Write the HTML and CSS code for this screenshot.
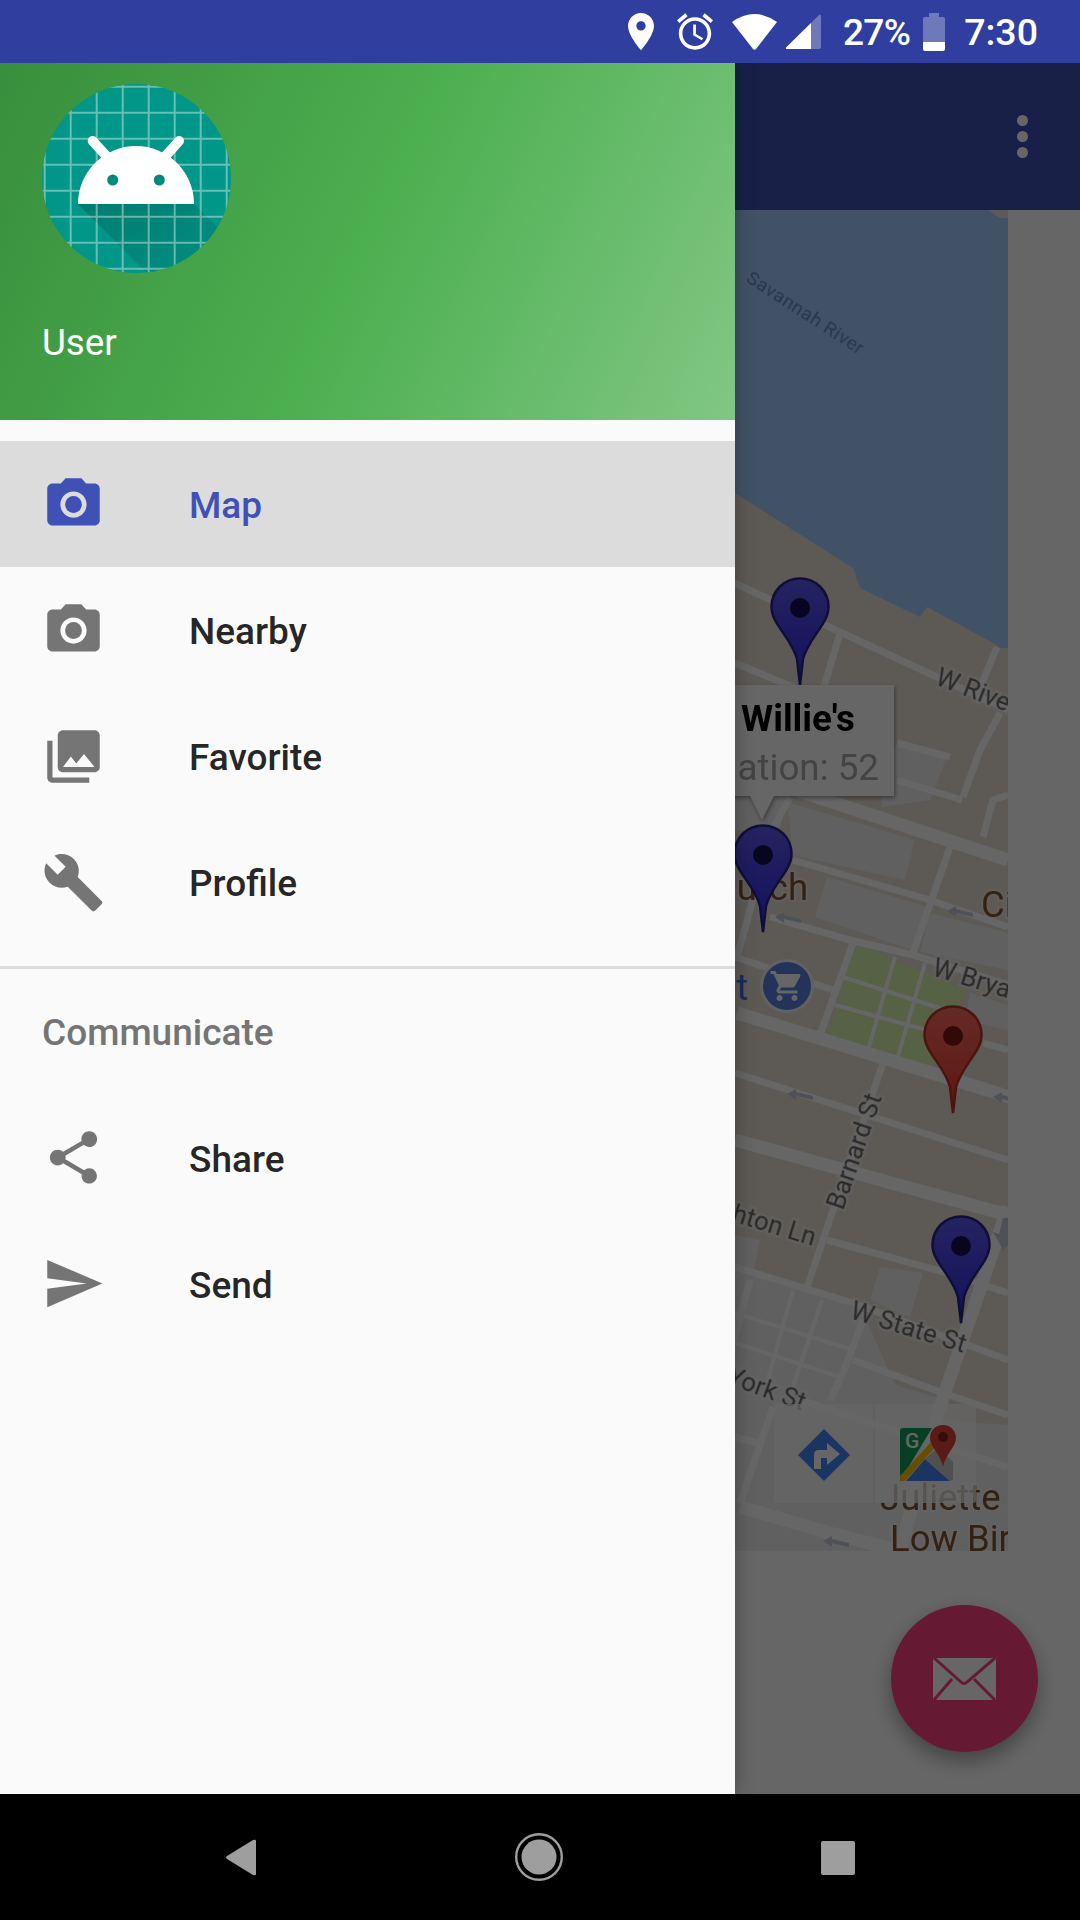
FILE: index.html
```html
<!DOCTYPE html>
<html lang="en">
<head>
<meta charset="utf-8">
<title>Map</title>
<link rel="stylesheet" href="styles.css">
</head>
<body>
<div class="screen">
  <header class="statusbar">
    <svg class="st st-pin" viewBox="5 2 14 20"><path class="w" d="M12 2C8.13 2 5 5.13 5 9c0 5.25 7 13 7 13s7-7.75 7-13c0-3.87-3.13-7-7-7zm0 9.5c-1.38 0-2.5-1.12-2.5-2.5s1.12-2.5 2.5-2.5 2.5 1.12 2.5 2.5-1.12 2.5-2.5 2.5z"/></svg>
    <svg class="st st-alarm" viewBox="2 1.86 20 20.14"><path class="w" d="M22 5.72l-4.6-3.86-1.29 1.53 4.6 3.86L22 5.72zM7.88 3.39L6.6 1.86 2 5.71l1.29 1.53 4.59-3.85zM12.5 8H11v6l4.75 2.85.75-1.23-4-2.37V8zM12 4c-4.97 0-9 4.03-9 9s4.03 9 9 9 9-4.03 9-9-4.03-9-9-9zm0 16c-3.87 0-7-3.13-7-7s3.13-7 7-7 7 3.13 7 7-3.13 7-7 7z"/></svg>
    <svg class="st st-wifi" viewBox="0 0 45 36"><path class="w" d="M0 8Q22.500-8 45 8L24.200 34.800Q22.500 36.500 20.800 34.800Z"/></svg>
    <svg class="st st-signal" viewBox="0 0 35 35"><path class="w" d="M0 33.500L25 9V35H1Q-.5 35 0 33.500Z"/><path class="wa" d="M25 9L33 1Q35-.5 35 2V33Q35 35 33 35H25Z"/></svg>
    <span class="st-text st-pct">27%</span>
    <svg class="st st-batt" viewBox="0 0 22 38"><path class="wa" d="M6 0H16V4H20Q22 4 22 6V29H0V6Q0 4 2 4H6Z"/><path class="w" d="M0 29H22V36Q22 38 20 38H2Q0 38 0 36Z"/></svg>
    <span class="st-text st-time">7:30</span>
  </header>

  <div class="stage">
    <main class="app">
      <div class="toolbar">
        <div class="overflow"><i></i><i></i><i></i></div>
      </div>
      <div class="content">
        <svg class="map" viewBox="0 210 1008 1341" width="1008" height="1341">
          <defs>
            <linearGradient id="pinBlue" x1="0" y1="0" x2="0" y2="1"><stop offset="0" stop-color="#5f58f0"/><stop offset="1" stop-color="#2d2de8"/></linearGradient>
            <linearGradient id="pinRed" x1="0" y1="0" x2="0" y2="1"><stop offset="0" stop-color="#fb6a60"/><stop offset="1" stop-color="#f03a30"/></linearGradient>
            <symbol id="pinb" viewBox="0 0 60 108" overflow="visible">
              <path class="pin-b" d="M30 1.500C14 1.500 1.500 14 1.500 30C1.500 47 21 60 27 82L30 108L33 82C39 60 58.500 47 58.500 30C58.500 14 46 1.500 30 1.500Z"/>
              <circle class="pin-dot" cx="30" cy="31" r="10"/>
            </symbol>
            <symbol id="pinr" viewBox="0 0 60 108" overflow="visible">
              <path class="pin-r" d="M30 1.500C14 1.500 1.500 14 1.500 30C1.500 47 21 60 27 82L30 108L33 82C39 60 58.500 47 58.500 30C58.500 14 46 1.500 30 1.500Z"/>
              <circle class="pin-dot-r" cx="30" cy="31" r="10"/>
            </symbol>
            <symbol id="arrow" viewBox="0 0 26 12" overflow="visible">
              <path class="oneway" d="M0 5L9 0V3L26 7V11L9 7V11Z"/>
            </symbol>
          </defs>

          <rect class="land" x="700" y="210" width="308" height="1341"/>
          <path class="water" d="M700 210H988L1000 218H1008V648H1000L997 645L927 607L920 617L860 588L853 568L735 493L700 470Z"/>

          <g class="blocks">
            <path d="M787 802L915 840L905 880L793 855Z"/>
            <path d="M827 877L927 907L912 950L815 917Z"/>
            <path d="M930 913L1008 933V970L920 952Z"/>
            <path d="M970 993L1008 1005V1030L965 1020Z"/>
            <path d="M880 743L947 757L930 800L882 807Z"/>
            <path d="M880 1267L923 1273L910 1317L870 1300Z"/>
            <path d="M735 780L790 780L780 830L735 830Z"/>
            <path d="M735 1235L760 1240L750 1290L735 1285Z"/>
            <path d="M735 1270L860 1305L895 1385L945 1400L935 1420L1008 1425V1551H735Z"/>
          </g>
          <path class="park" d="M855 943L965 990L933 1067L828 1037Z"/>

          <g class="roads">
            <path d="M700 567L1008 710"/>
            <path d="M735 663L800 690"/>
            <path d="M840 633L823 690"/>
            <path d="M997 647L975 700"/>
            <path d="M1000 713L980 750L963 797"/>
            <path d="M897 743L950 757"/>
            <path d="M897 780L962 800"/>
            <path d="M1008 795L993 800L983 837"/>
            <path d="M950 847L913 953"/>
            <path d="M793 860L930 900L1008 927"/>
            <path d="M770 917L850 940L913 955L1008 985"/>
            <path d="M735 957L833 990"/>
            <path d="M853 943L820 1035"/>
            <path d="M983 1043L1008 1050"/>
            <path d="M883 1063L807 1287"/>
            <path d="M735 1073L1008 1160"/>
            <path d="M827 1240L937 1270L1008 1293"/>
            <path d="M735 1267L853 1303L973 1347L1008 1360"/>
            <path d="M853 1360L943 1393L1008 1415"/>
            <path d="M750 1280L733 1343"/>
            <path d="M800 1400L1008 1467"/>
            <path d="M773 1407L740 1503"/>
            <path d="M735 1437L757 1443"/>
            <path d="M863 1320L843 1373L830 1400"/>
            <path d="M790 797L775 825L750 910L737 957"/>
          </g>
          <g class="roads roads-thin">
            <path d="M793 1290L767 1383"/>
            <path d="M822 1300L793 1387"/>
            <path d="M735 1313L853 1350"/>
            <path d="M735 1343L840 1377"/>
            <path d="M895 957L868 1050"/>
            <path d="M925 963L897 1060"/>
            <path d="M843 977L945 1010"/>
            <path d="M835 1005L937 1033"/>
          </g>
          <g class="roads roads-wide">
            <path d="M735 770L1008 860"/>
            <path d="M737 1013L1010 1097"/>
            <path d="M735 1140L1008 1215"/>
            <path d="M1008 1207L940 1407L900 1551"/>
            <path d="M740 1507L830 1533L900 1551"/>
          </g>

          <use href="#arrow" x="775" y="912" width="26" height="12"/>
          <use href="#arrow" x="947" y="906" width="26" height="12"/>
          <use href="#arrow" x="787" y="1089" width="26" height="12"/>
          <use href="#arrow" x="993" y="1092" width="26" height="12"/>
          <use href="#arrow" x="823" y="1536" width="26" height="12"/>
          <path class="oneway" d="M1003 1218L1008 1218V1245L1003 1250L993 1232L999 1234Z"/>

          <text class="lbl lbl-water" transform="translate(745 281) rotate(33)">Savannah River</text>
          <text class="lbl" transform="translate(934 684) rotate(21)">W River St</text>
          <text class="lbl" transform="translate(931 975) rotate(17)">W Bryan St</text>
          <text class="lbl" transform="translate(843 1211) rotate(-71)">Barnard St</text>
          <text class="lbl lbl-end" transform="translate(813 1246) rotate(17)">Broughton Ln</text>
          <text class="lbl" transform="translate(849 1318) rotate(17)">W State St</text>
          <text class="lbl lbl-end" transform="translate(802 1411) rotate(20)">York St</text>
          <text class="poi poi-end" x="808" y="900">Church</text>
          <text class="poi" x="981" y="917">City</text>
          <text class="poi-blue" x="748" y="1000" text-anchor="end">Market</text>
          <text class="poi" x="880" y="1510">Juliette</text>
          <text class="poi" x="890" y="1551">Low Bird</text>

          <g class="shop">
            <circle class="shop-ring" cx="787" cy="986" r="27"/>
            <circle class="shop-fill" cx="787" cy="986" r="24"/>
            <path class="shop-cart" transform="translate(769 968) scale(1.5)" d="M7 18c-1.100 0-1.990.9-1.990 2S5.900 22 7 22s2-.9 2-2-.9-2-2-2zM1 2v2h2l3.600 7.590-1.350 2.450c-.16.28-.25.61-.25.96 0 1.100.9 2 2 2h12v-2H7.420c-.14 0-.25-.11-.25-.25l.03-.12.9-1.630h7.450c.75 0 1.410-.41 1.750-1.030l3.580-6.490c.08-.14.12-.31.12-.48 0-.55-.45-1-1-1H5.210l-.94-2H1zm16 16c-1.100 0-1.990.9-1.990 2s.89 2 1.990 2 2-.9 2-2-.9-2-2-2z"/>
          </g>

          <g class="maptools">
            <path class="tool" d="M777 1404H873V1503H777Q774 1503 774 1500V1407Q774 1404 777 1404Z"/>
            <path class="tool" d="M875 1404H973Q976 1404 976 1407V1500Q976 1503 973 1503H875Z"/>
            <path class="dir" d="M824 1429L850 1455L824 1481L798 1455Z"/>
            <path class="dir-arrow" d="M814 1469V1455Q814 1450 819 1450H827V1443L840 1454L827 1465V1458H821V1469Z"/>
            <path class="gm-green" d="M903 1428H932L900 1481V1431Q900 1428 903 1428Z"/>
            <path class="gm-blue" d="M925 1459L950 1481H906Z"/>
            <path class="gm-grey" d="M925 1459L938 1447L953 1462V1478Q953 1481 950 1481Z"/>
            <path class="gm-road" d="M900 1476L932 1441L936 1446L905 1481H900Z"/>
            <text class="gm-g" x="905" y="1448">G</text>
            <path class="gm-pin" d="M943 1425C935 1425 930 1431 930 1438C930 1447 940 1453 943 1467C946 1453 956 1447 956 1438C956 1431 951 1425 943 1425Z"/>
            <circle class="gm-dot" cx="943" cy="1437" r="5"/>
          </g>

          <use href="#pinb" x="770" y="577" width="60" height="108"/>
          <g class="infowin">
            <path class="iw-body" d="M620 685H894V796H774L762 820L750 796H620Z"/>
            <text class="iw-title" x="741" y="731">Willie's</text>
            <text class="iw-snippet" x="879" y="780">Population: 52</text>
          </g>
          <use href="#pinb" x="733" y="824" width="60" height="108"/>
          <use href="#pinr" x="923" y="1005" width="60" height="108"/>
          <use href="#pinb" x="931" y="1215" width="60" height="108"/>
        </svg>
      </div>
      <button class="fab" type="button" aria-label="Email">
        <svg class="fab-icon" viewBox="0 0 63 42">
          <rect class="mail-body" width="63" height="42" rx="1"/>
          <path class="mail-line" d="M1 0L28 24Q31 27 34 24L62 0M1 42L19 21M62 42L41 21"/>
        </svg>
      </button>
    </main>

    <div class="scrim"></div>

    <aside class="drawer">
      <div class="drawer-head">
        <svg class="avatar" viewBox="0 0 189 189" width="189" height="189">
          <defs>
            <clipPath id="avClip"><circle cx="94.500" cy="94.500" r="94.500"/></clipPath>
            <linearGradient id="avShadow" x1="0" y1="0" x2="1" y2="1"><stop offset="0" stop-color="#000" stop-opacity=".17"/><stop offset="1" stop-color="#000" stop-opacity="0"/></linearGradient>
          </defs>
          <g clip-path="url(#avClip)">
            <rect class="av-bg" width="189" height="189"/>
            <path class="av-shadow" d="M36 120H152L240 208L130 214Z"/>
            <path class="av-grid" d="M2.700 0V189M28.700 0V189M54.700 0V189M80.700 0V189M106.700 0V189M132.700 0V189M158.700 0V189M184.700 0V189M0 2.700H189M0 28.700H189M0 54.700H189M0 80.700H189M0 106.700H189M0 132.700H189M0 158.700H189M0 184.700H189"/>
            <path class="av-ant" d="M50.700 57L68 76M137 57L120 76"/>
            <path class="av-dome" d="M36 120A58 58 0 0 1 152 120Z"/>
            <circle class="av-eye" cx="70.700" cy="96" r="5.500"/>
            <circle class="av-eye" cx="117.300" cy="96" r="5.500"/>
          </g>
        </svg>
        <div class="user">User</div>
      </div>

      <nav class="menu">
        <a class="item selected">
          <svg class="ic" viewBox="0 0 24 24"><circle cx="12" cy="12" r="3.200"/><path d="M9 2L7.170 4H4c-1.100 0-2 .9-2 2v12c0 1.100.9 2 2 2h16c1.100 0 2-.9 2-2V6c0-1.100-.9-2-2-2h-3.170L15 2H9zm3 15c-2.760 0-5-2.240-5-5s2.240-5 5-5 5 2.240 5 5-2.240 5-5 5z"/></svg>
          <span>Map</span>
        </a>
        <a class="item">
          <svg class="ic" viewBox="0 0 24 24"><circle cx="12" cy="12" r="3.200"/><path d="M9 2L7.170 4H4c-1.100 0-2 .9-2 2v12c0 1.100.9 2 2 2h16c1.100 0 2-.9 2-2V6c0-1.100-.9-2-2-2h-3.170L15 2H9zm3 15c-2.760 0-5-2.240-5-5s2.240-5 5-5 5 2.240 5 5-2.240 5-5 5z"/></svg>
          <span>Nearby</span>
        </a>
        <a class="item">
          <svg class="ic" viewBox="0 0 24 24"><path d="M22 16V4c0-1.100-.9-2-2-2H8c-1.100 0-2 .9-2 2v12c0 1.100.9 2 2 2h12c1.100 0 2-.9 2-2zm-11-4l2.030 2.710L16 11l4 5H8l3-4zM2 6v14c0 1.100.9 2 2 2h14v-2H4V6H2z"/></svg>
          <span>Favorite</span>
        </a>
        <a class="item">
          <svg class="ic" viewBox="0 0 24 24"><path d="M22.700 19l-9.100-9.100c.9-2.300.4-5-1.500-6.900-2-2-5-2.400-7.400-1.300L9 6 6 9 1.600 4.700C.4 7.100.9 10.100 2.900 12.100c1.900 1.900 4.600 2.400 6.900 1.500l9.100 9.100c.4.4 1 .4 1.400 0l2.300-2.300c.5-.4.5-1.100.1-1.400z"/></svg>
          <span>Profile</span>
        </a>
        <div class="divider"></div>
        <div class="subhead">Communicate</div>
        <a class="item item-low">
          <svg class="ic" viewBox="0 0 24 24"><path d="M18 16.080c-.76 0-1.440.3-1.960.77L8.910 12.700c.05-.23.09-.46.09-.7s-.04-.47-.09-.7l7.050-4.110c.54.5 1.250.81 2.040.81 1.660 0 3-1.340 3-3s-1.340-3-3-3-3 1.340-3 3c0 .24.04.47.09.7L8.040 9.810C7.500 9.310 6.790 9 6 9c-1.660 0-3 1.340-3 3s1.340 3 3 3c.79 0 1.500-.31 2.040-.81l7.120 4.160c-.05.21-.08.43-.08.65 0 1.610 1.310 2.920 2.920 2.920 1.610 0 2.920-1.310 2.920-2.920s-1.310-2.920-2.920-2.920z"/></svg>
          <span>Share</span>
        </a>
        <a class="item item-low">
          <svg class="ic" viewBox="0 0 24 24"><path d="M2.010 21L23 12 2.010 3 2 10l15 2-15 2z"/></svg>
          <span>Send</span>
        </a>
      </nav>
    </aside>
  </div>

  <footer class="navbar">
    <svg class="nav-ic nav-back" viewBox="0 0 32 37"><path d="M31 2V35Q31 37 28 36L2 20Q0 18.500 2 17L28 1Q31 0 31 2Z"/></svg>
    <svg class="nav-ic nav-home" viewBox="0 0 48 48"><circle class="ring" cx="24" cy="24" r="22.800"/><circle cx="24" cy="24" r="17.500"/></svg>
    <div class="nav-recent"></div>
  </footer>
</div>
</body>
</html>
```

FILE: styles.css
```css
* { box-sizing: border-box; }
html, body { margin: 0; padding: 0; }
body { font-family: Roboto, "Liberation Sans", sans-serif; background: #000; }

.screen { width: 1080px; height: 1920px; display: flex; flex-direction: column; overflow: hidden; }

/* status bar */
.statusbar { height: 63px; flex: none; background: #303f9f; display: flex; align-items: center; justify-content: flex-end; padding-right: 42px; position: relative; z-index: 3; }
.st { display: block; flex: none; }
.w { fill: #fff; }
.wa { fill: #fff; fill-opacity: .3; }
.st-pin { width: 26px; height: 37px; margin-right: 23px; }
.st-alarm { width: 36px; height: 37px; margin-right: 19px; }
.st-wifi { width: 45px; height: 36px; margin-right: 9px; }
.st-signal { width: 35px; height: 35px; margin-right: 22px; }
.st-batt { width: 22px; height: 38px; margin: 0 19px 0 13px; }
.st-text { color: #fff; font-size: 37.500px; font-weight: 500; line-height: 63px; padding-top: 2px; }
.st-pct { font-size: 37px; letter-spacing: -.7px; }

/* stage */
.stage { flex: 1; position: relative; min-height: 0; }
.app { position: absolute; inset: 0; background: #fff; display: flex; flex-direction: column; }
.toolbar { height: 147px; flex: none; background: #3f51b5; display: flex; justify-content: flex-end; align-items: center; padding-right: 52px; }
.overflow { display: flex; flex-direction: column; gap: 5px; }
.overflow i { display: block; width: 11px; height: 11px; border-radius: 50%; background: #fff; }
.content { flex: 1; min-height: 0; }
.map { display: block; }

.land { fill: #e9dfd4; }
.water { fill: #a5cdff; }
.blocks { filter: blur(.6px); }
.blocks path { fill: #f0f0f0; }
.park { fill: #d6f2ae; filter: blur(.6px); }
.roads { filter: blur(.7px); }
.roads path { fill: none; stroke: #fff; stroke-width: 7; }
.roads-thin path { stroke-width: 4; }
.roads-wide path { stroke-width: 13; }
.oneway { fill: #c4cbdc; }

.lbl { font: 400 25.800px Roboto, sans-serif; fill: #686868; stroke: #fff; stroke-opacity: .45; stroke-width: 5px; paint-order: stroke; filter: blur(.4px); }
.lbl-end { text-anchor: end; }
.lbl-water { font-size: 19px; fill: #6186c4; stroke: none; letter-spacing: .5px; }
.poi { font: 400 36.500px Roboto, sans-serif; fill: #80542f; stroke: #fff; stroke-opacity: .35; stroke-width: 4px; paint-order: stroke; filter: blur(.4px); }
.poi-end { text-anchor: end; }
.poi-blue { font: 400 36px Roboto, sans-serif; fill: #3f6fe0; }
.shop-ring { fill: #f4f4f4; }
.shop-fill { fill: #5a7fe0; }
.shop-cart { fill: #fff; }

.tool { fill: #fff; fill-opacity: .72; }
.dir { fill: #4285f4; }
.dir-arrow { fill: #fff; }
.gm-green { fill: #0f9d58; }
.gm-blue { fill: #4285f4; }
.gm-grey { fill: #c8c8c8; }
.gm-road { fill: #ffc107; }
.gm-g { font: 500 21px Roboto, sans-serif; fill: #fff; }
.gm-pin { fill: #e0453a; }
.gm-dot { fill: #8e2018; }

.pin-b { fill: url(#pinBlue); stroke: #26248e; stroke-width: 2.500; }
.pin-r { fill: url(#pinRed); stroke: #b8322a; stroke-width: 2.500; }
.pin-dot { fill: #14104e; }
.pin-dot-r { fill: #7e1712; }

.infowin { filter: drop-shadow(1px 2px 2px rgba(0,0,0,.4)); }
.iw-body { fill: #fff; }
.iw-title { font: 700 36.750px Roboto, sans-serif; fill: #000; }
.iw-snippet { font: 400 36.750px Roboto, sans-serif; fill: #a8a8a8; text-anchor: end; }

/* fab */
.fab { position: absolute; left: 891px; top: 1542px; width: 147px; height: 147px; border: 0; padding: 0; border-radius: 50%; background: #ff4081; display: flex; align-items: center; justify-content: center; box-shadow: 0 9px 20px rgba(0,0,0,.35); }
.fab-icon { width: 63px; height: 42px; display: block; }
.mail-body { fill: #fff; }
.mail-line { fill: none; stroke: #ff4081; stroke-width: 3; }

.scrim { position: absolute; inset: 0; background: rgba(0,0,0,.6); }

/* drawer */
.drawer { position: absolute; left: 0; top: 0; bottom: 0; width: 735px; background: #fafafa; display: flex; flex-direction: column; box-shadow: 0 0 18px rgba(0,0,0,.3); }
.drawer-head { height: 357px; flex: none; padding: 21px 42px 0; background: linear-gradient(115.900deg, #388e3c, #4caf50 50%, #81c784); display: flex; flex-direction: column; }
.avatar { display: block; flex: none; }
.av-bg { fill: #009688; }
.av-shadow { fill: url(#avShadow); }
.av-grid { fill: none; stroke: #fff; stroke-opacity: .4; stroke-width: 2; }
.av-ant { fill: none; stroke: #fff; stroke-width: 10; stroke-linecap: round; }
.av-dome { fill: #fff; }
.av-eye { fill: #008a7c; }
.user { margin-top: 43px; color: #fff; font-size: 36.750px; line-height: 54px; }

.menu { padding-top: 21px; flex: 1; display: flex; flex-direction: column; }
.item { height: 126px; flex: none; display: flex; align-items: center; padding-left: 42px; gap: 84px; color: rgba(0,0,0,.87); font-size: 37px; font-weight: 500; }
.item span { padding-top: 2px; }
.item-low span { padding-top: 4px; }
.ic { width: 63px; height: 63px; flex: none; display: block; fill: #757575; }
.selected { background: #dcdcdc; color: #3f51b5; }
.selected .ic { fill: #3f51b5; }
.divider { height: 3px; background: #dcdcdc; margin-top: 21px; flex: none; }
.subhead { height: 125px; flex: none; display: flex; align-items: center; padding: 2px 0 0 42px; color: #757575; font-size: 37px; font-weight: 500; }

/* nav bar */
.navbar { height: 126px; flex: none; background: #000; position: relative; z-index: 3; display: flex; align-items: center; padding: 0 225px 0 225px; justify-content: space-between; }
.nav-ic { display: block; fill: #9e9e9e; }
.nav-back { width: 32px; height: 37px; }
.nav-home { width: 48px; height: 48px; }
.ring { fill: none; stroke: #9e9e9e; stroke-width: 2.400; }
.nav-recent { width: 34px; height: 34px; border-radius: 2px; background: #9e9e9e; margin-top: 2px; }
```
